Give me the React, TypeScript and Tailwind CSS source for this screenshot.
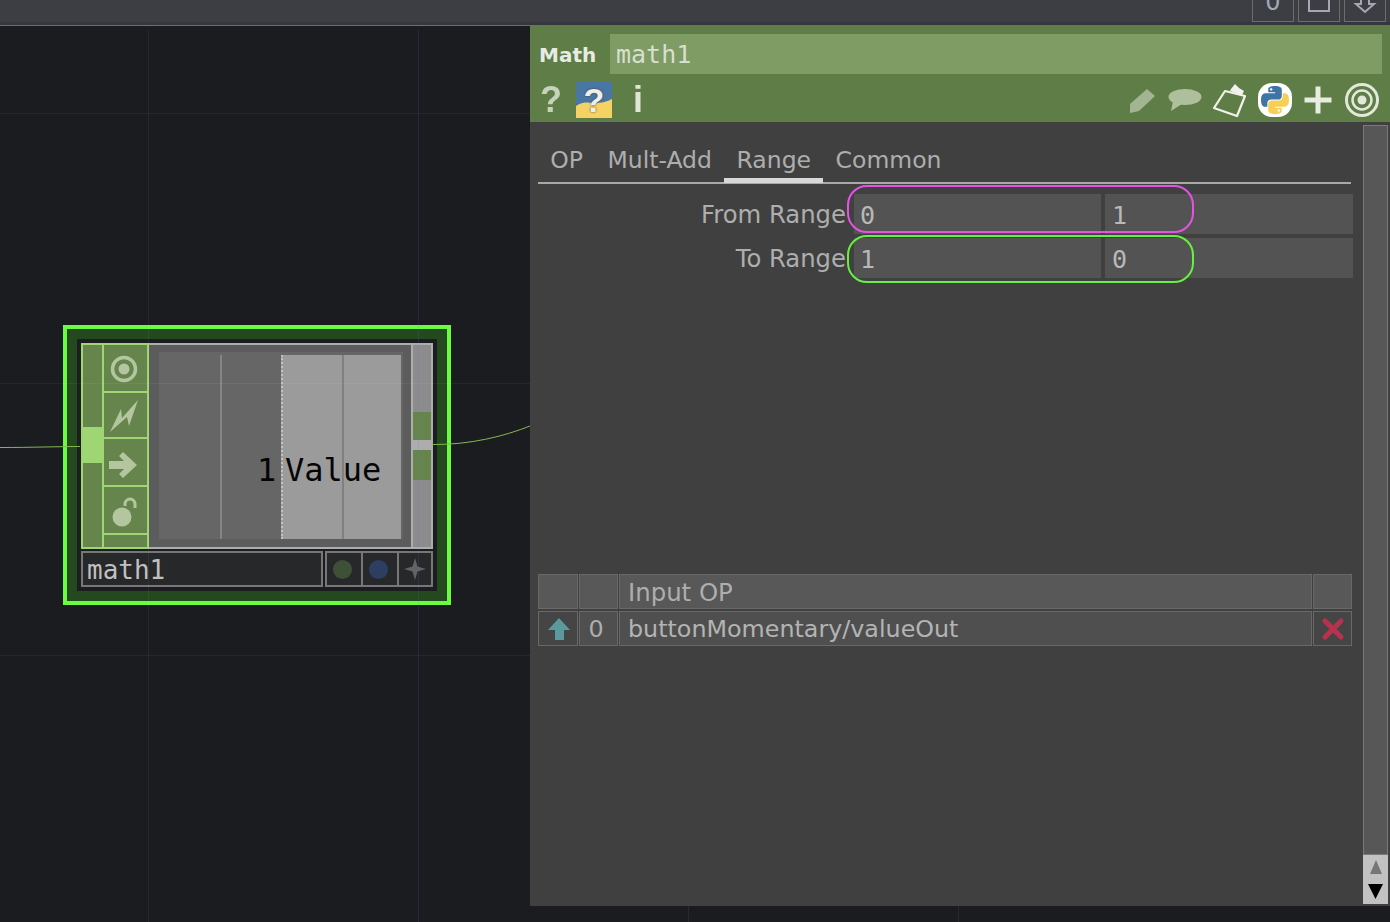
const sans = "font-['DejaVu_Sans',sans-serif]";
const mono = "font-['DejaVu_Sans_Mono',monospace]";

function PythonLogo() {
  const snake =
    "M54.9 0C26.8 0 28.5 12.2 28.5 12.2l.03 12.6h26.8v3.8H17.9S0 26.6 0 54.8c0 28.2 15.6 27.2 15.6 27.2h9.3V68.9s-.5-15.6 15.4-15.6h26.5s14.9.2 14.9-14.4V14.7S84 0 54.9 0zM40.1 8.5c2.7 0 4.8 2.2 4.8 4.8 0 2.7-2.2 4.8-4.8 4.8-2.7 0-4.8-2.2-4.8-4.8 0-2.7 2.2-4.8 4.8-4.8z";
  return (
    <div className="w-[34px] h-[34px] rounded-[14px] bg-white flex items-center justify-center">
      <svg width="28" height="28" viewBox="0 0 110 110">
        <path d={snake} fill="#3f74a6" />
        <path d={snake} fill="#f7cf55" transform="rotate(180 55 55)" />
      </svg>
    </div>
  );
}

function HeaderIcons() {
  return (
    <div className="h-[48px] pt-[4px] flex items-center">
      <span className="ml-[10px] w-[20px] text-center font-['Liberation_Sans',sans-serif] font-bold text-[36px] leading-none text-[#c6d2ba] blur-[0.5px]">?</span>
      <div className="relative ml-[16px] w-[36px] h-[36px]">
        <svg width="36" height="36" viewBox="0 0 36 36" className="block">
          <rect width="36" height="36" fill="#4a76a4" />
          <path d="M0 36V24c8-5 10-3 18-3s12-1 18-4v19z" fill="#f6d264" />
        </svg>
        <span className="absolute inset-0 text-center font-['Liberation_Sans',sans-serif] font-bold text-[34px] leading-[36px] text-[#eef0e8] [text-shadow:0_0_2px_#333]">?</span>
      </div>
      <span className="ml-[17px] w-[18px] text-center font-['Liberation_Sans',sans-serif] font-bold text-[36px] leading-none text-[#dfe6d8] blur-[0.4px]">i</span>
      <div className="flex-1" />
      <div className="flex items-center pr-[10px]">
        {/* pencil */}
        <svg width="28" height="30" viewBox="0 0 28 30" className="blur-[0.6px]">
          <path d="M1 19 18 4l8 7L10 26l-9 2z" fill="#a2b590" />
        </svg>
        {/* comment */}
        <svg width="34" height="26" viewBox="0 0 34 26" className="ml-[11px] blur-[0.6px]">
          <ellipse cx="17" cy="10" rx="16.500" ry="8" fill="#adc09b" />
          <path d="M5 14 3 24l11-7z" fill="#adc09b" />
        </svg>
        {/* clipboard */}
        <svg width="36" height="36" viewBox="0 0 36 36" className="ml-[10px] blur-[0.3px]">
          <path d="M13 9 33 14 25 34 2 26z" fill="none" stroke="#f0f3ec" strokeWidth="2.200" strokeLinejoin="round" />
          <path d="M19 7l4-5 4 4 5 3-2 4-12-4z" fill="#f0f3ec" />
        </svg>
        <div className="ml-[10px]"><PythonLogo /></div>
        {/* plus */}
        <svg width="34" height="34" viewBox="0 0 34 34" className="ml-[9px] blur-[0.3px]">
          <path d="M14.500 3.500h5v11h11v5h-11v11h-5v-11h-11v-5h11z" fill="#e8ede2" />
        </svg>
        {/* target */}
        <svg width="36" height="36" viewBox="0 0 36 36" className="ml-[9px] blur-[0.3px]">
          <circle cx="18" cy="18" r="15.500" fill="none" stroke="#e2e8da" strokeWidth="3" />
          <circle cx="18" cy="18" r="9.500" fill="none" stroke="#e2e8da" strokeWidth="2.500" />
          <circle cx="18" cy="18" r="4.500" fill="#e2e8da" />
        </svg>
      </div>
    </div>
  );
}

function ParamRow({ label, a, b }: { label: string; a: string; b: string }) {
  return (
    <div className="flex h-[40px] gap-[4px]">
      <div className={`w-[312px] pr-[4px] text-right text-[24.300px] leading-[42px] text-[#aeaeae] ${sans}`}>{label}</div>
      <div className={`w-[247px] pl-[6px] bg-[#535353] text-[#b8b8b8] text-[25px] leading-[43px] ${mono}`}>{a}</div>
      <div className={`w-[248px] pl-[7px] bg-[#535353] text-[#b8b8b8] text-[25px] leading-[43px] ${mono}`}>{b}</div>
    </div>
  );
}

function Panel() {
  const tabs = ["OP", "Mult-Add", "Range", "Common"];
  const cell = "border border-[#686868]";
  return (
    <div className="relative w-[860px] h-[880px] flex flex-col bg-[#404040]">
      {/* header */}
      <div className="h-[96px] bg-[#5f7d47] flex flex-col">
        <div className="h-[48px] pt-[8px] flex">
          <div className={`w-[80px] pl-[9px] text-[20px] leading-[42px] font-bold text-[#e8ebe4] ${sans}`}>Math</div>
          <div className={`w-[772px] h-[40px] pl-[6px] bg-[#7e9c63] text-[25px] leading-[42px] text-[#d8dfd0] ${mono}`}>math1</div>
        </div>
        <HeaderIcons />
      </div>

      <div className="flex-1 flex min-h-0">
        <div className="w-[833px] pl-[8px] flex flex-col">
          {/* tabs */}
          <div className="h-[62px] w-[813px] mb-[10px] flex items-end border-b-2 border-[#a9a9a9]">
            {tabs.map((t) => (
              <div
                key={t}
                className={`h-[51px] -mb-[1px] px-[12.300px] text-[23.500px] leading-[56px] text-[#aeaeae] ${sans} ${
                  t === "Range" ? "border-b-[5px] border-[#d8d8d8]" : ""
                }`}
              >
                {t}
              </div>
            ))}
          </div>

          {/* params */}
          <div className="relative flex flex-col gap-[4px]">
            <ParamRow label="From Range" a="0" b="1" />
            <ParamRow label="To Range" a="1" b="0" />
            <div className="absolute left-[309px] top-[-9px] w-[347px] h-[48px] rounded-[20px] border-2 border-[#e553e6]" />
            <div className="absolute left-[309px] top-[41px] w-[347px] h-[48px] rounded-[20px] border-2 border-[#68f040]" />
          </div>

          {/* input table */}
          <div className="mt-[296px] w-[814px] grid grid-cols-[40px_39px_693px_39px] grid-rows-[35px_35px] gap-x-px gap-y-[2px]">
            <div className={`${cell} bg-[#585858]`} />
            <div className={`${cell} bg-[#585858]`} />
            <div className={`${cell} bg-[#585858] pl-[8px] text-[24.400px] leading-[36px] text-[#aeaeae] ${sans}`}>Input OP</div>
            <div className={`${cell} bg-[#585858]`} />
            <div className={`${cell} bg-[#454545] pl-[2px] flex items-center justify-center`}>
              <svg width="24" height="24" viewBox="0 0 24 24" className="blur-[0.5px]">
                <path d="M12 1 23 13h-6v10H8V13H1z" fill="#5b9a9c" />
              </svg>
            </div>
            <div className={`${cell} bg-[#4f4f4f] pr-[5px] text-center text-[23.800px] leading-[34px] text-[#aeaeae] ${sans}`}>0</div>
            <div className={`${cell} bg-[#4f4f4f] pl-[8px] text-[23.800px] leading-[34px] text-[#b4b4b4] ${sans}`}>buttonMomentary/valueOut</div>
            <div className={`${cell} bg-[#454545] flex items-center justify-center`}>
              <svg width="24" height="24" viewBox="0 0 24 24" className="blur-[0.5px]">
                <path d="M4 4 20 20M20 4 4 20" stroke="#b8324f" strokeWidth="5" strokeLinecap="round" />
              </svg>
            </div>
          </div>
        </div>

        {/* scrollbar */}
        <div className="w-[25px] mt-[3px] mb-[2px] flex flex-col">
          <div className="flex-1 bg-[#575757] border border-[#7a7a7a]" />
          <div className="h-[49px] bg-[#c2c2c2] flex flex-col items-center justify-center gap-[10px]">
            <svg width="14" height="14" viewBox="0 0 14 14"><path d="M7 0l6 14H1z" fill="#767676" /></svg>
            <svg width="15" height="15" viewBox="0 0 15 15"><path d="M7.500 15 0 0h15z" fill="#000" /></svg>
          </div>
        </div>
      </div>
    </div>
  );
}

function IconCell({ h, children }: { h: string; children?: React.ReactNode }) {
  return <div className={`${h} bg-[#66854c] border-b-2 border-[#9dd672] flex items-center justify-center`}>{children}</div>;
}

function MathNode() {
  return (
    <div className="absolute left-[63px] top-[299px] w-[388px] h-[280px] border-4 border-[#6bfb3f] bg-[#24491f] p-[10px]">
      <div className="w-[360px] h-[252px] bg-[#1c1d20] p-[4px] flex flex-col gap-[2px]">
        {/* viewer */}
        <div className="h-[206px] flex">
          <div className="w-[21px] border-2 border-r-0 border-[#9dd672] bg-[#66854c] flex flex-col pt-[82px]">
            <div className="h-[36px] bg-[#9dd672]" />
          </div>
          <div className="w-[47px] border-2 border-[#9dd672] flex flex-col">
            <IconCell h="h-[48px]">
              <svg width="28" height="28" viewBox="0 0 28 28" className="-ml-[3px] mt-[2px] blur-[0.5px]">
                <circle cx="14" cy="14" r="11.500" fill="none" stroke="#b3c6a0" strokeWidth="3.500" />
                <circle cx="14" cy="14" r="5.500" fill="#b3c6a0" />
              </svg>
            </IconCell>
            <IconCell h="h-[46px]">
              <svg width="30" height="34" viewBox="0 0 30 34" className="-ml-[3px] mt-[2px] blur-[0.5px]">
                <path d="M1 33 12 10l1 9L29 1 20 27l-2-9z" fill="#b3c6a0" />
              </svg>
            </IconCell>
            <IconCell h="h-[48px]">
              <svg width="28" height="26" viewBox="0 0 28 26" className="-ml-[6px] mt-[5px] blur-[0.5px]">
                <path d="M14 0 28 13 14 26l-4-4 5-5H0V9h15l-5-5z" fill="#b3c6a0" />
              </svg>
            </IconCell>
            <IconCell h="h-[48px]">
              <svg width="26" height="30" viewBox="0 0 26 30" className="-ml-[1px] mt-[4px] blur-[0.5px]">
                <circle cx="10" cy="20" r="9.500" fill="#b3c6a0" />
                <path d="M13 9V7a5 5 0 0 1 10 0v4" fill="none" stroke="#b3c6a0" strokeWidth="3" />
              </svg>
            </IconCell>
            <div className="flex-1 bg-[#66854c]" />
          </div>
          <div className="w-[262px] border-y-2 border-[#adadad] bg-[#5c5c5c] pl-[10px] pt-[7px]">
            <div className="relative w-[244px] h-[187px] flex pt-[3px] bg-[#666666]">
              <div className="w-[122px] pl-[61px]">
                <div className="w-[2px] h-full bg-[#858585]" />
              </div>
              <div className="w-[120px] pl-[59px] bg-[#9b9b9b] border-l-2 border-dotted border-[#c2c2c2]">
                <div className="w-[2px] h-full bg-[#808080]" />
              </div>
              <span className={`absolute left-[98px] top-[98px] text-[32px] leading-[40px] text-[#050505] whitespace-pre ${mono}`}>1</span>
              <span className={`absolute left-[126px] top-[98px] text-[32px] leading-[40px] text-[#050505] whitespace-pre ${mono}`}>Value</span>
            </div>
          </div>
          <div className="w-[22px] border-x-2 border-y-2 border-[#adadad] bg-[#8c8c8c] flex flex-col pt-[67px]">
            <div className="h-[28px] bg-[#66854c]" />
            <div className="h-[10px] bg-[#adadad]" />
            <div className="h-[30px] bg-[#66854c]" />
          </div>
        </div>

        {/* name bar */}
        <div className="h-[36px] flex gap-[2px]">
          <div className={`w-[242px] border-2 border-[#777777] bg-[#27282a] pl-[4px] text-[26px] leading-[34px] text-[#c0c0c0] ${mono}`}>math1</div>
          <div className="w-[108px] border-2 border-[#777777] bg-[#27282a] flex">
            <div className="w-[36px] pr-[4px] border-r-2 border-[#777777] flex items-center justify-center">
              <div className="w-[19px] h-[19px] rounded-full bg-[#3e5035]" />
            </div>
            <div className="w-[36px] pr-[4px] border-r-2 border-[#777777] flex items-center justify-center">
              <div className="w-[19px] h-[19px] rounded-full bg-[#2c3f63]" />
            </div>
            <div className="flex-1 flex items-center justify-center">
              <svg width="24" height="24" viewBox="0 0 24 24" className="blur-[0.4px]">
                <path d="M12 1l2.500 8.500L23 12l-8.500 2.500L12 23l-2.500-8.500L1 12l8.500-2.500z" fill="#636363" />
              </svg>
            </div>
          </div>
        </div>
      </div>
    </div>
  );
}

function TopButton({ children }: { children: React.ReactNode }) {
  return <div className="w-[42px] h-[22px] border border-t-0 border-[#6a6c72] overflow-hidden">{children}</div>;
}

export default function App() {
  return (
    <div className="relative w-[1390px] h-[922px] overflow-hidden bg-[#1a1c20] flex flex-col">
      {/* top bar */}
      <div className="h-[26px] bg-[#3c3e43] border-b border-[#6e6e72] flex flex-col">
        <div className="h-[22px] flex justify-end gap-[4px] pr-[4px]">
          <TopButton><span className={`block text-center -mt-[13px] text-[24px] leading-[30px] text-[#a4a8b4] ${sans}`}>0</span></TopButton>
          <TopButton><div className="mx-auto -mt-[4px] w-[22px] h-[16px] border-2 border-[#a4a8b4]" /></TopButton>
          <TopButton>
            <svg width="24" height="14" viewBox="0 0 24 14" className="mx-auto">
              <path d="M8 -2v6H3l9 8 9-8h-5v-6" fill="none" stroke="#a4a8b4" strokeWidth="2" />
            </svg>
          </TopButton>
        </div>
        <div className="h-[3px] bg-[#35373c]" />
      </div>

      <div className="relative flex-1 flex">
        <div className="w-[530px]" />

        {/* canvas grid + wires + node */}
        <MathNode />
        <div className="absolute left-[148px] top-[4px] bottom-0 w-px bg-white/[0.05]" />
        <div className="absolute left-[418px] top-[4px] bottom-0 w-px bg-[#6a6cff]/[0.14]" />
        <div className="absolute left-[688px] top-[4px] bottom-0 w-px bg-white/[0.06]" />
        <div className="absolute left-[958px] top-[4px] bottom-0 w-px bg-white/[0.06]" />
        <div className="absolute left-0 top-[87px] w-[530px] h-px bg-white/[0.05]" />
        <div className="absolute left-0 top-[357px] w-[530px] h-px bg-white/[0.05]" />
        <div className="absolute left-0 top-[629px] w-[530px] h-px bg-white/[0.05]" />
        <svg className="absolute left-0 top-0" width="530" height="500">
          <path d="M0 421.500C30 421.500 60 420.500 80 420.500" fill="none" stroke="#84b84f" strokeWidth="1" />
          <path d="M432 418.500C470 419 505 410 530 400" fill="none" stroke="#84b84f" strokeWidth="1" />
        </svg>

        <Panel />
      </div>
    </div>
  );
}
